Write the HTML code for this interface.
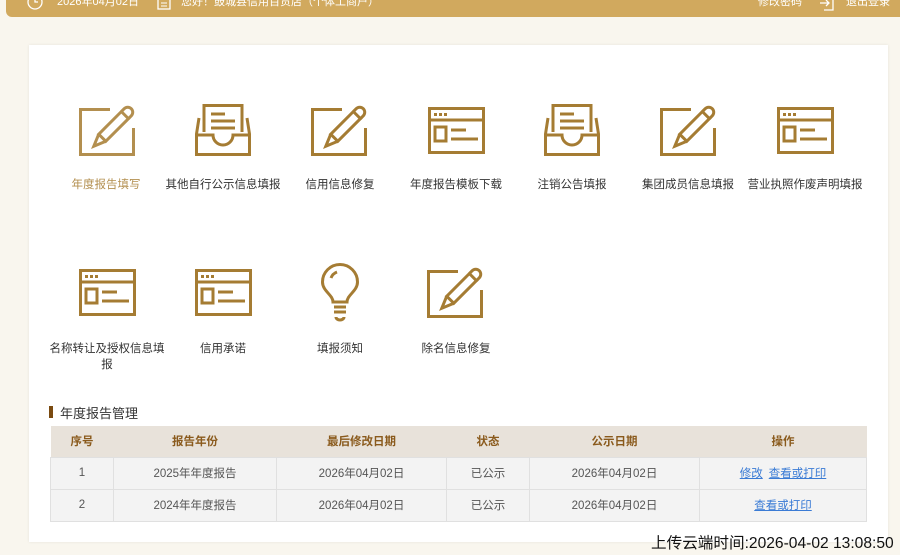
<!DOCTYPE html>
<html><head><meta charset="utf-8"><style>
*{margin:0;padding:0;box-sizing:border-box}
body{width:900px;height:555px;background:#f9f6ee;position:relative;overflow:hidden;font-family:"Liberation Sans","Noto Sans CJK SC",sans-serif}
.top{position:absolute;left:6px;top:0;width:894px;height:17px;background:#d1a95e;border-bottom-left-radius:6px;color:#fff;font-size:11px}
.top span{position:absolute;top:-5px;line-height:14px}
.card{position:absolute;left:29px;top:45px;width:859px;height:497px;background:#fff;box-shadow:0 0 3px rgba(0,0,0,.08)}
.ic{position:absolute}
.lb{position:absolute;width:130px;text-align:center;font-size:11.5px;color:#333;line-height:16px}
svg{overflow:visible}
.t{position:absolute;left:50px;top:426px;border-collapse:collapse;font-size:11.5px;width:817px}
.t th{background:#e8e2da;color:#8a5a1c;height:31px;font-weight:bold}
.t td{background:#f3f3f3;color:#555;height:32px;border:1px solid #e0e0e0;text-align:center}
.t a{color:#3a7bd5;text-decoration:underline;margin:0 3px}
</style></head><body>
<div class="top">
<svg style="position:absolute;left:21px;top:-6px" width="16" height="16"><circle cx="8" cy="8" r="7" fill="none" stroke="#fff" stroke-width="1.3"/><path d="M8 4V8H11" fill="none" stroke="#fff" stroke-width="1.3"/></svg>
<span style="left:51px">2026年04月02日</span>
<svg style="position:absolute;left:151px;top:-6px" width="14" height="16"><rect x="1" y="1" width="12" height="14" fill="none" stroke="#fff" stroke-width="1.3"/><path d="M4 9H10M4 12H10" stroke="#fff"/></svg>
<span style="left:175px">您好！鼓城县信用百货店（个体工商户）</span>
<span style="left:752px">修改密码</span>
<svg style="position:absolute;left:813px;top:-5px" width="16" height="16"><path d="M5 1H14V15H5M1 8H10M7 5L10 8L7 11" fill="none" stroke="#fff" stroke-width="1.3"/></svg>
<span style="left:840px">退出登录</span>
</div>
<div class="card"></div>

<svg class="ic" style="left:79px;top:106px" width="56" height="50"><g fill="none" stroke="#b38f4f" stroke-width="3"><path d="M31 3.5H1.5V48.5H54.5V22"/><g transform="translate(36,19) rotate(-45)"><path d="M-18 -5H14V5H-18Z"/><path d="M-18 -5L-30 0L-18 5"/><path d="M14 -5H18A5 5 0 0 1 18 5H14"/></g></g></svg>
<svg class="ic" style="left:195px;top:104px" width="56" height="52"><g fill="none" stroke="#a57c33" stroke-width="3"><path d="M4 14L1.5 30V50.5H54.5V30L52 14"/><path d="M1.5 31H18A10 10 0 0 0 38 31H54.5"/><path d="M9 28V1.5H47V28"/><path d="M16 10H30M16 17H40M16 24H40"/></g></svg>
<svg class="ic" style="left:311px;top:106px" width="56" height="50"><g fill="none" stroke="#a57c33" stroke-width="3"><path d="M31 3.5H1.5V48.5H54.5V22"/><g transform="translate(36,19) rotate(-45)"><path d="M-18 -5H14V5H-18Z"/><path d="M-18 -5L-30 0L-18 5"/><path d="M14 -5H18A5 5 0 0 1 18 5H14"/></g></g></svg>
<svg class="ic" style="left:428px;top:107px" width="57" height="47"><g fill="none" stroke="#a57c33" stroke-width="3"><rect x="1.5" y="1.5" width="54" height="44"/><path d="M1.5 13H55.5"/><rect x="7" y="20" width="11" height="14"/><path d="M23 23H38M23 32H50"/></g><g fill="#a57c33"><rect x="6" y="6" width="3" height="3"/><rect x="11" y="6" width="3" height="3"/><rect x="16" y="6" width="3" height="3"/></g></svg>
<svg class="ic" style="left:544px;top:104px" width="56" height="52"><g fill="none" stroke="#a57c33" stroke-width="3"><path d="M4 14L1.5 30V50.5H54.5V30L52 14"/><path d="M1.5 31H18A10 10 0 0 0 38 31H54.5"/><path d="M9 28V1.5H47V28"/><path d="M16 10H30M16 17H40M16 24H40"/></g></svg>
<svg class="ic" style="left:660px;top:106px" width="56" height="50"><g fill="none" stroke="#a57c33" stroke-width="3"><path d="M31 3.5H1.5V48.5H54.5V22"/><g transform="translate(36,19) rotate(-45)"><path d="M-18 -5H14V5H-18Z"/><path d="M-18 -5L-30 0L-18 5"/><path d="M14 -5H18A5 5 0 0 1 18 5H14"/></g></g></svg>
<svg class="ic" style="left:777px;top:107px" width="57" height="47"><g fill="none" stroke="#a57c33" stroke-width="3"><rect x="1.5" y="1.5" width="54" height="44"/><path d="M1.5 13H55.5"/><rect x="7" y="20" width="11" height="14"/><path d="M23 23H38M23 32H50"/></g><g fill="#a57c33"><rect x="6" y="6" width="3" height="3"/><rect x="11" y="6" width="3" height="3"/><rect x="16" y="6" width="3" height="3"/></g></svg>

<div class="lb" style="left:41px;top:177px;color:#b38f4f">年度报告填写</div>
<div class="lb" style="left:158px;top:177px">其他自行公示信息填报</div>
<div class="lb" style="left:275px;top:177px">信用信息修复</div>
<div class="lb" style="left:391px;top:177px">年度报告模板下载</div>
<div class="lb" style="left:507px;top:177px">注销公告填报</div>
<div class="lb" style="left:623px;top:177px">集团成员信息填报</div>
<div class="lb" style="left:740px;top:177px">营业执照作废声明填报</div>

<svg class="ic" style="left:79px;top:269px" width="57" height="47"><g fill="none" stroke="#a57c33" stroke-width="3"><rect x="1.5" y="1.5" width="54" height="44"/><path d="M1.5 13H55.5"/><rect x="7" y="20" width="11" height="14"/><path d="M23 23H38M23 32H50"/></g><g fill="#a57c33"><rect x="6" y="6" width="3" height="3"/><rect x="11" y="6" width="3" height="3"/><rect x="16" y="6" width="3" height="3"/></g></svg>
<svg class="ic" style="left:195px;top:269px" width="57" height="47"><g fill="none" stroke="#a57c33" stroke-width="3"><rect x="1.5" y="1.5" width="54" height="44"/><path d="M1.5 13H55.5"/><rect x="7" y="20" width="11" height="14"/><path d="M23 23H38M23 32H50"/></g><g fill="#a57c33"><rect x="6" y="6" width="3" height="3"/><rect x="11" y="6" width="3" height="3"/><rect x="16" y="6" width="3" height="3"/></g></svg>
<svg class="ic" style="left:321px;top:265px" width="38" height="56"><g fill="none" stroke="#a57c33" stroke-width="3"><path d="M12 37C12 30 1.5 26 1.5 17A17.5 17.5 0 0 1 36.5 17C36.5 26 26 30 26 37Z"/><path d="M13 42H25M13 47H25"/><path d="M15 52A4 3 0 0 0 23 52"/><path d="M10 13A10 10 0 0 1 16 7"/></g></svg>
<svg class="ic" style="left:427px;top:268px" width="56" height="50"><g fill="none" stroke="#a57c33" stroke-width="3"><path d="M31 3.5H1.5V48.5H54.5V22"/><g transform="translate(36,19) rotate(-45)"><path d="M-18 -5H14V5H-18Z"/><path d="M-18 -5L-30 0L-18 5"/><path d="M14 -5H18A5 5 0 0 1 18 5H14"/></g></g></svg>

<div class="lb" style="left:47px;top:341px;width:120px">名称转让及授权信息填报</div>
<div class="lb" style="left:158px;top:341px">信用承诺</div>
<div class="lb" style="left:275px;top:341px">填报须知</div>
<div class="lb" style="left:391px;top:341px">除名信息修复</div>

<div style="position:absolute;left:49px;top:406px;width:4px;height:12px;background:#7a4a10"></div>
<div style="position:absolute;left:60px;top:403px;font-size:13px;color:#333">年度报告管理</div>

<table class="t">
<tr><th style="width:63px">序号</th><th style="width:163px">报告年份</th><th style="width:170px">最后修改日期</th><th style="width:83px">状态</th><th style="width:170px">公示日期</th><th>操作</th></tr>
<tr><td>1</td><td>2025年年度报告</td><td>2026年04月02日</td><td>已公示</td><td>2026年04月02日</td><td><a>修改</a><a>查看或打印</a></td></tr>
<tr><td>2</td><td>2024年年度报告</td><td>2026年04月02日</td><td>已公示</td><td>2026年04月02日</td><td><a>查看或打印</a></td></tr>
</table>
<div style="position:absolute;left:651px;top:531px;font-size:15.6px;color:#111;white-space:nowrap">上传云端时间:2026-04-02 13:08:50</div>
</body></html>
